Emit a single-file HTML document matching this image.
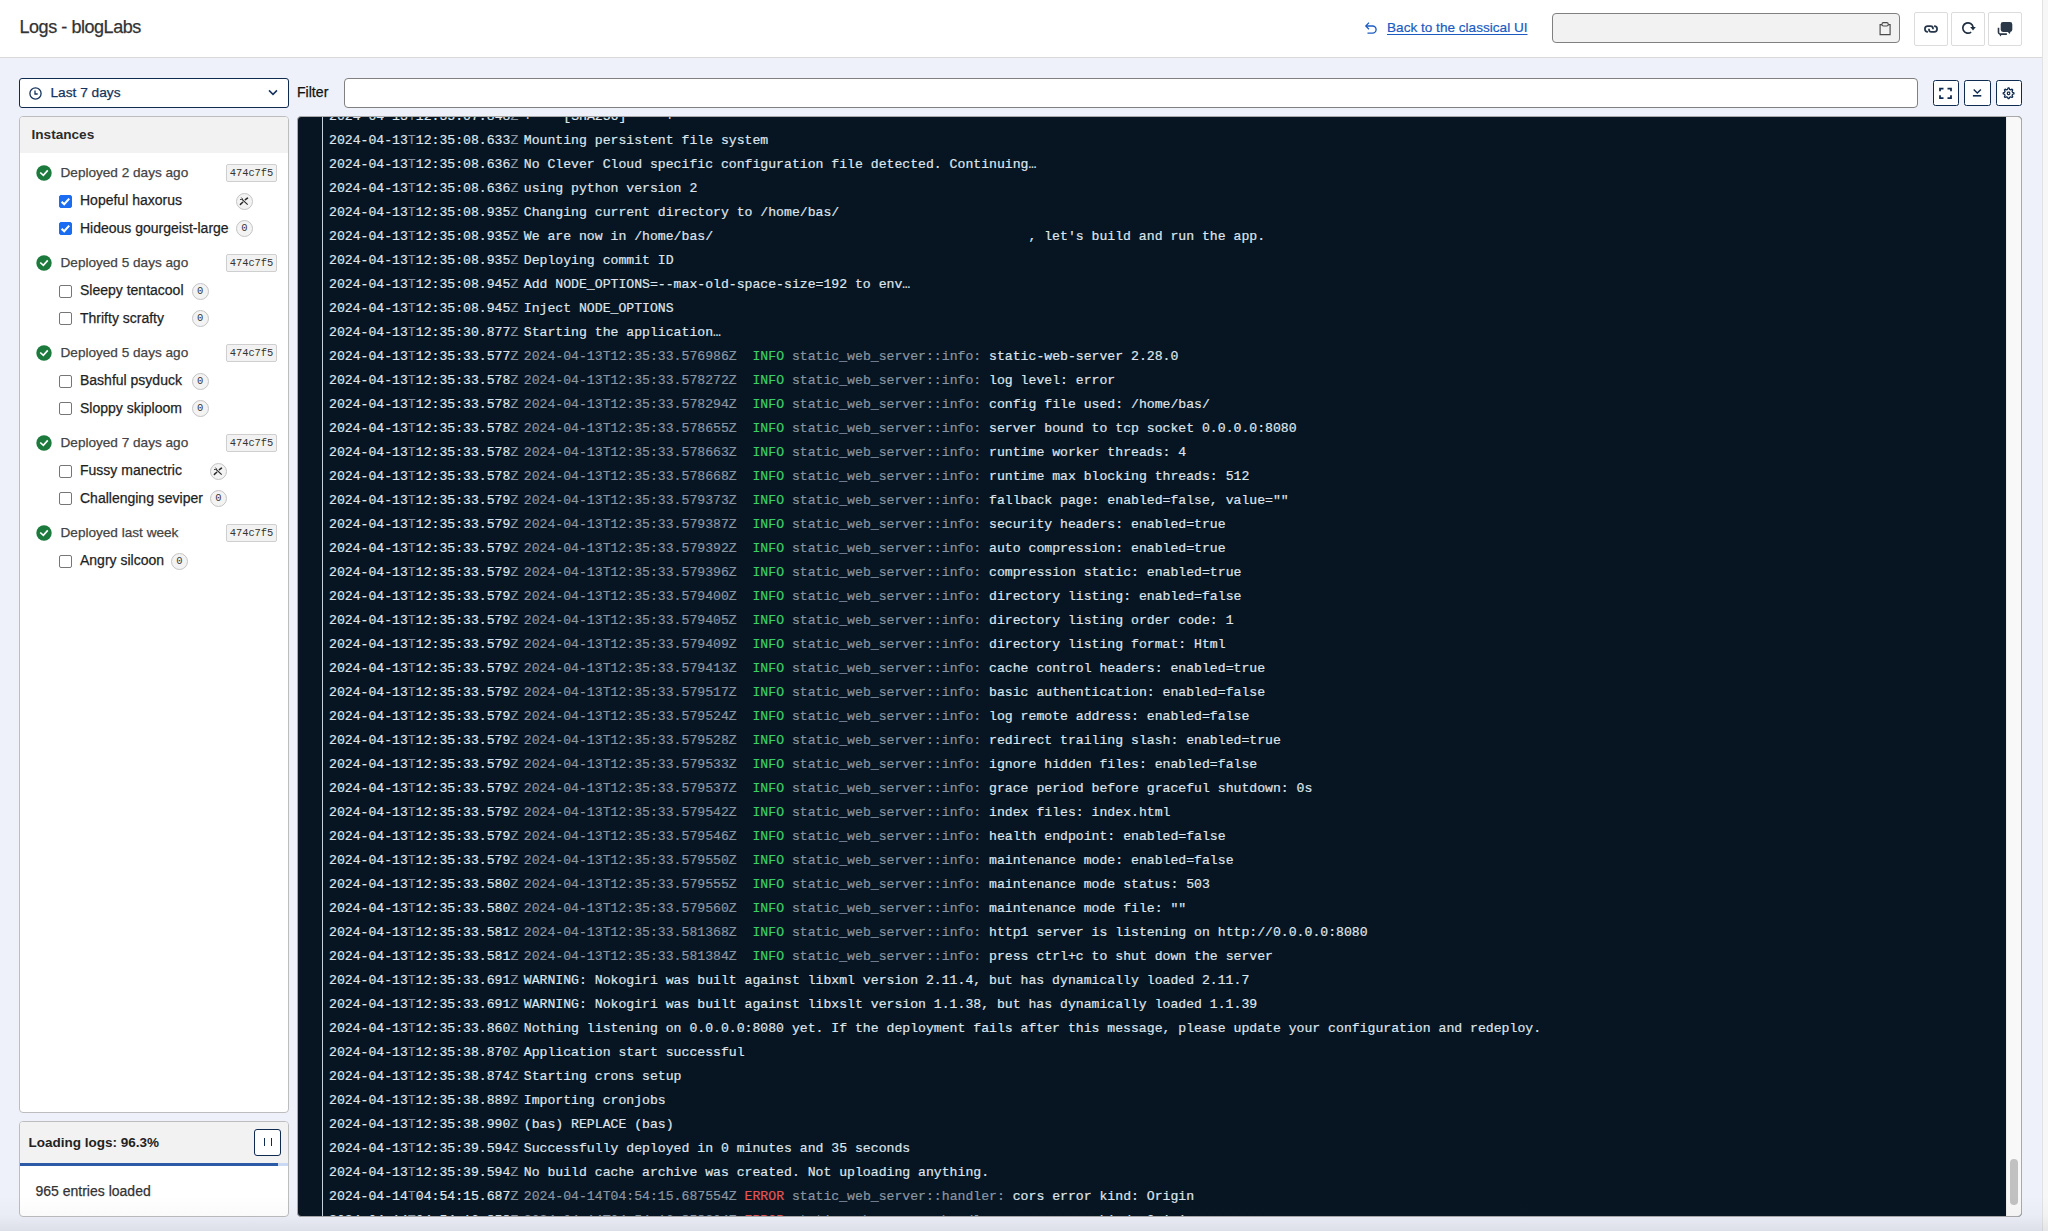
<!DOCTYPE html>
<html><head><meta charset="utf-8"><title>Logs - blogLabs</title>
<style>
*{box-sizing:border-box;margin:0;padding:0}
html,body{width:2048px;height:1231px;overflow:hidden}
body{position:relative;background:#eef1f9;font-family:"Liberation Sans",sans-serif;color:#333}
.ab{position:absolute}
svg{display:block}
#hdr{position:absolute;left:0;top:0;width:2042px;height:58px;background:#fff;border-bottom:1px solid #d9d9d9}
#rstrip{position:absolute;left:2042px;top:0;width:6px;height:1231px;background:#f7f7f7;border-left:1px solid #e2e2e2}
.title{left:19.5px;top:16px;font-size:18px;letter-spacing:-0.45px;line-height:22px;color:#333;white-space:pre;-webkit-text-stroke:0.25px #333}
.back{left:1387px;top:18.5px;font-size:13.6px;line-height:18px;color:#1b5bc2;text-decoration:underline;text-underline-offset:1.5px;white-space:pre;-webkit-text-stroke:0.2px #1b5bc2}
.dinput{left:1552px;top:13px;width:348px;height:30px;border:1px solid #808080;border-radius:4px;background:#f2f2f2}
.hbtn{top:12px;width:34px;height:34px;border:1px solid #dcdcdc;border-radius:2px;background:#fff}
.hbtn svg{position:absolute;left:0;top:0}
.sel{left:19px;top:78px;width:270px;height:30px;border:1px solid #0f2b50;border-radius:3px;background:#fff}
.seltxt{left:50.5px;top:84px;font-size:13.7px;line-height:18px;color:#15335c;white-space:pre;-webkit-text-stroke:0.25px #15335c}
.flabel{left:297px;top:83px;font-size:14.1px;line-height:18px;color:#111;white-space:pre;-webkit-text-stroke:0.25px #111}
.finput{left:344px;top:78px;width:1574px;height:30px;border:1px solid #808080;border-radius:4px;background:#fff}
.fbtn{top:80px;width:26px;height:26px;border:1px solid #0f2b50;border-radius:2.5px;background:#fff}
.fbtn svg{position:absolute;left:0;top:0}
.panel{border:1px solid #bdbdbd;border-radius:4px;background:#fff;overflow:hidden}
.phead{position:absolute;left:0;top:0;right:0;background:#f2f2f2}
.ptitle{font-size:13.6px;font-weight:bold;line-height:18px;color:#2b2b2b;white-space:pre}
.deptxt{font-size:13.6px;line-height:18px;color:#444;white-space:pre;-webkit-text-stroke:0.25px #444}
.iname{font-size:14px;line-height:18px;color:#1f1f1f;white-space:pre;-webkit-text-stroke:0.25px #1f1f1f}
.sha{width:51px;height:18px;border:1px solid #cfcfcf;border-radius:2px;background:#f2f2f2;font-family:"Liberation Mono",monospace;font-size:10.4px;line-height:17px;text-align:center;color:#333;letter-spacing:0}
.cb{width:13px;height:13px;border:1px solid #767676;border-radius:2px;background:#fff}
.cb.on{background:#1a6cf0;border-color:#1a6cf0}
.cb svg{position:absolute;left:-1px;top:-1px}
.bdg{width:17px;height:17px;border:1px solid #c4c4c4;border-radius:50%;background:#f3f3f3;font-family:"Liberation Mono",monospace;font-size:10.5px;line-height:15px;text-align:center;color:#333}
#logs{left:297px;top:116px;width:1725px;height:1101px;border:1px solid #a9a9a9;border-radius:4px;background:#061521;overflow:hidden}
#gut{position:absolute;left:24px;top:0;width:1px;height:100%;background:#c9d1dc}
#lines{position:absolute;left:31px;top:-11.6px;font-family:"Liberation Mono",monospace;font-size:13.15px;line-height:24px;color:#dfe5ee;-webkit-text-stroke:0.2px currentColor}
.l{height:24px;display:flex;white-space:pre}
.t i{font-style:normal;color:#8a95a3}
.m{margin-left:5.5px}
.g{color:#8a95a3}
.hy{font-weight:normal;position:relative;top:-2px}
.ok{color:#3ccf66}
.er{color:#e65353}
#sb{position:absolute;right:0;top:0;width:15px;height:100%;background:#f8f8f8;border-left:1px solid #ececec}
#thumb{position:absolute;left:2.6px;top:1042px;width:8px;height:46px;border-radius:4px;background:#c1c1c1}
#shade{position:absolute;left:0;top:1196px;width:2048px;height:35px;background:linear-gradient(to bottom,rgba(40,45,60,0) 0%,rgba(40,45,60,0.025) 55%,rgba(40,45,60,0.09) 100%);pointer-events:none}
</style></head><body>
<div id="hdr"></div>
<div id="rstrip"></div>
<div class="ab title">Logs - blogLabs</div>
<div class="ab" style="left:1364px;top:20px"><svg width="15" height="15" viewBox="0 0 15 15"><path d="M2 6 H8.5 A3.6 3.6 0 0 1 8.5 13.2 H3.5" fill="none" stroke="#1b5bc2" stroke-width="1.3"/><path d="M5 2.6 L1.8 6 L5 9.3" fill="none" stroke="#1b5bc2" stroke-width="1.3"/></svg></div>
<div class="ab back">Back to the classical UI</div>
<div class="ab dinput"><svg style="position:absolute;left:326px;top:8px" width="14" height="15" viewBox="0 0 14 15"><path d="M1.1 2.6 H11.1 V12.6 H1.1 Z" fill="none" stroke="#4a4a4a" stroke-width="1.15"/><rect x="2.95" y="0.65" width="6.3" height="3.4" rx="1.5" fill="#f2f2f2" stroke="#4a4a4a" stroke-width="1.1"/></svg></div>
<div class="ab hbtn" style="left:1914px"><svg width="34" height="34" viewBox="1 1 34 34"><path d="M13.9 19.8 H13.7 A2.8 2.8 0 0 1 13.7 14.2 H16.6 A2.4 2.4 0 0 1 19 16.6 V17.2" fill="none" stroke="#26364a" stroke-width="1.7"/><path d="M20.1 14.2 H20.3 A2.8 2.8 0 0 1 20.3 19.8 H17.4 A2.4 2.4 0 0 1 15 17.4 V16.8" fill="none" stroke="#26364a" stroke-width="1.7"/></svg></div>
<div class="ab hbtn" style="left:1951px"><svg width="34" height="34" viewBox="1 1 34 34"><path d="M20.13 20.15 A5.2 5.2 0 1 1 22.1 15.1" fill="none" stroke="#1e2e40" stroke-width="1.7"/><path d="M19.2 15.0 L24.8 15.0 L22 18.4 Z" fill="#1e2e40"/></svg></div>
<div class="ab hbtn" style="left:1988px"><svg width="34" height="34" viewBox="1 1 34 34"><path d="M10.5 15.7 V20.2 A1.9 1.9 0 0 0 12.4 22.1 H18.9" fill="none" stroke="#2b3847" stroke-width="1.6"/><path d="M11.3 22.2 L12.4 24.4 L13.9 22.2 Z" fill="#2b3847"/><rect x="12.7" y="10.1" width="11.6" height="9.8" rx="2.3" fill="#2b3847"/><path d="M19.2 19.5 L21.9 21.9 L22.4 19.5 Z" fill="#2b3847"/></svg></div>

<div class="ab sel"></div>
<div class="ab" style="left:29px;top:87px"><svg width="13" height="13" viewBox="0 0 13 13"><circle cx="6.5" cy="6.5" r="5.6" fill="none" stroke="#15335c" stroke-width="1.3"/><path d="M6 3.5 V7 H8.7" fill="none" stroke="#15335c" stroke-width="1.3"/></svg></div>
<div class="ab seltxt">Last 7 days</div>
<div class="ab" style="left:268px;top:89px"><svg width="10" height="7" viewBox="0 0 10 7"><path d="M1 1.4 L5 5.4 L9 1.4" fill="none" stroke="#15335c" stroke-width="1.5"/></svg></div>
<div class="ab flabel">Filter</div>
<div class="ab finput"></div>
<div class="ab fbtn" style="left:1933px"><svg width="26" height="26" viewBox="1 1 26 26"><path d="M7 11.3 V8.7 H10.5 M14.5 8.7 H18 V11.3 M18 15.2 V18 H14.5 M10.5 18 H7 V15.2" fill="none" stroke="#0f2b50" stroke-width="1.75"/></svg></div>
<div class="ab fbtn" style="left:1964px;width:27px"><svg width="26" height="26" viewBox="1 1 26 26"><path d="M9.7 9.5 L13.3 13.1 L16.9 9.5" fill="none" stroke="#0f2b50" stroke-width="1.4"/><path d="M8.9 15.8 H17.3" fill="none" stroke="#0f2b50" stroke-width="1.6"/></svg></div>
<div class="ab fbtn" style="left:1996px"><svg width="26" height="26" viewBox="1 1 26 26"><path d="M11.61 9.31 L12.04 7.93 L13.10 7.93 L13.53 9.31 L14.71 9.80 L16.00 9.13 L16.74 9.87 L16.07 11.16 L16.56 12.34 L17.94 12.77 L17.94 13.83 L16.56 14.26 L16.07 15.44 L16.74 16.73 L16.00 17.47 L14.71 16.80 L13.53 17.29 L13.10 18.67 L12.04 18.67 L11.61 17.29 L10.43 16.80 L9.14 17.47 L8.40 16.73 L9.07 15.44 L8.58 14.26 L7.20 13.83 L7.20 12.77 L8.58 12.34 L9.07 11.16 L8.40 9.87 L9.14 9.13 L10.43 9.80 Z" fill="none" stroke="#0f2b50" stroke-width="1.25" stroke-linejoin="round"/><rect x="11.37" y="12.2" width="2.4" height="2.4" rx="0.8" fill="none" stroke="#0f2b50" stroke-width="1.2"/></svg></div>

<div class="ab panel" style="left:19px;top:116px;width:270px;height:997px">
  <div class="phead" style="height:36px"></div>
  <div class="ab ptitle" style="left:11.5px;top:8.5px">Instances</div>
</div>
<div class="ab dep" style="left:36.05px;top:164.90px"><svg width="16" height="16" viewBox="0 0 16 16"><circle cx="8" cy="8" r="7.7" fill="#1c7a3d"/><path d="M4.25 7.5 L7.35 10.4 L11.75 5.4" fill="none" stroke="#fff" stroke-width="1.7"/></svg></div>
<div class="ab deptxt" style="left:60.5px;top:164px">Deployed 2 days ago</div>
<div class="ab sha" style="left:226px;top:164px">474c7f5</div>
<div class="ab cb on" style="left:59px;top:195.0px"><svg width="13" height="13" viewBox="0 0 13 13"><path d="M2.6 6.7 L5.2 9.3 L10.2 3.6" fill="none" stroke="#fff" stroke-width="2.1"/></svg></div>
<div class="ab iname" style="left:80px;top:191.45px">Hopeful haxorus</div>
<div class="ab bdg" style="left:236.0px;top:193.0px"><svg width="17" height="17" viewBox="0 0 17 17" style="position:absolute;left:-1px;top:-1px"><path d="M6.6 6.9 L11.7 11.6" fill="none" stroke="#2a2a2a" stroke-width="1.15"/><path d="M4.1 6.5 Q5.6 6.2 6.6 6.9 Q6.6 5.6 5.4 4.6" fill="none" stroke="#2a2a2a" stroke-width="1"/><path d="M4.4 11.4 L6.7 9.3" fill="none" stroke="#2a2a2a" stroke-width="1.5" stroke-linecap="round"/><path d="M9.4 6.6 L11.5 5.1" fill="none" stroke="#2a2a2a" stroke-width="1.6" stroke-linecap="round"/></svg></div>
<div class="ab cb on" style="left:59px;top:222.2px"><svg width="13" height="13" viewBox="0 0 13 13"><path d="M2.6 6.7 L5.2 9.3 L10.2 3.6" fill="none" stroke="#fff" stroke-width="2.1"/></svg></div>
<div class="ab iname" style="left:80px;top:219.15px">Hideous gourgeist-large</div>
<div class="ab bdg" style="left:236.0px;top:220.2px">0</div>
<div class="ab dep" style="left:36.05px;top:254.90px"><svg width="16" height="16" viewBox="0 0 16 16"><circle cx="8" cy="8" r="7.7" fill="#1c7a3d"/><path d="M4.25 7.5 L7.35 10.4 L11.75 5.4" fill="none" stroke="#fff" stroke-width="1.7"/></svg></div>
<div class="ab deptxt" style="left:60.5px;top:254px">Deployed 5 days ago</div>
<div class="ab sha" style="left:226px;top:254px">474c7f5</div>
<div class="ab cb" style="left:59px;top:285.0px"></div>
<div class="ab iname" style="left:80px;top:281.45px">Sleepy tentacool</div>
<div class="ab bdg" style="left:191.7px;top:283.0px">0</div>
<div class="ab cb" style="left:59px;top:312.2px"></div>
<div class="ab iname" style="left:80px;top:309.15px">Thrifty scrafty</div>
<div class="ab bdg" style="left:191.7px;top:310.2px">0</div>
<div class="ab dep" style="left:36.05px;top:344.90px"><svg width="16" height="16" viewBox="0 0 16 16"><circle cx="8" cy="8" r="7.7" fill="#1c7a3d"/><path d="M4.25 7.5 L7.35 10.4 L11.75 5.4" fill="none" stroke="#fff" stroke-width="1.7"/></svg></div>
<div class="ab deptxt" style="left:60.5px;top:344px">Deployed 5 days ago</div>
<div class="ab sha" style="left:226px;top:344px">474c7f5</div>
<div class="ab cb" style="left:59px;top:375.0px"></div>
<div class="ab iname" style="left:80px;top:371.45px">Bashful psyduck</div>
<div class="ab bdg" style="left:191.7px;top:373.0px">0</div>
<div class="ab cb" style="left:59px;top:402.2px"></div>
<div class="ab iname" style="left:80px;top:399.15px">Sloppy skiploom</div>
<div class="ab bdg" style="left:191.7px;top:400.2px">0</div>
<div class="ab dep" style="left:36.05px;top:434.90px"><svg width="16" height="16" viewBox="0 0 16 16"><circle cx="8" cy="8" r="7.7" fill="#1c7a3d"/><path d="M4.25 7.5 L7.35 10.4 L11.75 5.4" fill="none" stroke="#fff" stroke-width="1.7"/></svg></div>
<div class="ab deptxt" style="left:60.5px;top:434px">Deployed 7 days ago</div>
<div class="ab sha" style="left:226px;top:434px">474c7f5</div>
<div class="ab cb" style="left:59px;top:465.0px"></div>
<div class="ab iname" style="left:80px;top:461.45px">Fussy manectric</div>
<div class="ab bdg" style="left:209.9px;top:463.0px"><svg width="17" height="17" viewBox="0 0 17 17" style="position:absolute;left:-1px;top:-1px"><path d="M6.6 6.9 L11.7 11.6" fill="none" stroke="#2a2a2a" stroke-width="1.15"/><path d="M4.1 6.5 Q5.6 6.2 6.6 6.9 Q6.6 5.6 5.4 4.6" fill="none" stroke="#2a2a2a" stroke-width="1"/><path d="M4.4 11.4 L6.7 9.3" fill="none" stroke="#2a2a2a" stroke-width="1.5" stroke-linecap="round"/><path d="M9.4 6.6 L11.5 5.1" fill="none" stroke="#2a2a2a" stroke-width="1.6" stroke-linecap="round"/></svg></div>
<div class="ab cb" style="left:59px;top:492.2px"></div>
<div class="ab iname" style="left:80px;top:489.15px">Challenging seviper</div>
<div class="ab bdg" style="left:209.9px;top:490.2px">0</div>
<div class="ab dep" style="left:36.05px;top:524.90px"><svg width="16" height="16" viewBox="0 0 16 16"><circle cx="8" cy="8" r="7.7" fill="#1c7a3d"/><path d="M4.25 7.5 L7.35 10.4 L11.75 5.4" fill="none" stroke="#fff" stroke-width="1.7"/></svg></div>
<div class="ab deptxt" style="left:60.5px;top:524px">Deployed last week</div>
<div class="ab sha" style="left:226px;top:524px">474c7f5</div>
<div class="ab cb" style="left:59px;top:555.0px"></div>
<div class="ab iname" style="left:80px;top:551.45px">Angry silcoon</div>
<div class="ab bdg" style="left:170.9px;top:553.0px">0</div>

<div class="ab panel" style="left:19px;top:1121px;width:270px;height:96px">
  <div class="phead" style="height:41px"></div>
  <div class="ab" style="left:0;top:41px;width:258px;height:3px;background:#2d5aa6"></div>
  <div class="ab" style="left:258px;top:41px;width:12px;height:3px;background:#c9d8f5"></div>
  <div class="ab ptitle" style="left:8.5px;top:12px;font-size:13.5px;color:#222">Loading logs: 96.3%</div>
  <div class="ab" style="left:234px;top:7px;width:27px;height:27px;border:1px solid #0f2b50;border-radius:3px;background:#fff"><div class="ab" style="left:9px;top:8px;width:1.4px;height:8px;background:#0f2b50"></div><div class="ab" style="left:16px;top:8px;width:1.4px;height:8px;background:#0f2b50"></div></div>
  <div class="ab" style="left:15.5px;top:60px;font-size:14px;line-height:18px;color:#333;white-space:pre;-webkit-text-stroke:0.25px #333">965 entries loaded</div>
</div>

<div class="ab" id="logs">
  <div id="gut"></div>
  <div id="lines">
<div class="l"><span class="t">2024<b class="hy">-</b>04<b class="hy">-</b>13<i>T</i>12:35:07.848<i>Z</i></span><span class="m">+<b class="hy">-</b><b class="hy">-</b><b class="hy">-</b><b class="hy">-</b>[SHA256]<b class="hy">-</b><b class="hy">-</b><b class="hy">-</b><b class="hy">-</b><b class="hy">-</b>+</span></div>
<div class="l"><span class="t">2024-04-13<i>T</i>12:35:08.633<i>Z</i></span><span class="m">Mounting persistent file system</span></div>
<div class="l"><span class="t">2024-04-13<i>T</i>12:35:08.636<i>Z</i></span><span class="m">No Clever Cloud specific configuration file detected. Continuing…</span></div>
<div class="l"><span class="t">2024-04-13<i>T</i>12:35:08.636<i>Z</i></span><span class="m">using python version 2</span></div>
<div class="l"><span class="t">2024-04-13<i>T</i>12:35:08.935<i>Z</i></span><span class="m">Changing current directory to /home/bas/</span></div>
<div class="l"><span class="t">2024-04-13<i>T</i>12:35:08.935<i>Z</i></span><span class="m">We are now in /home/bas/                                        , let's build and run the app.</span></div>
<div class="l"><span class="t">2024-04-13<i>T</i>12:35:08.935<i>Z</i></span><span class="m">Deploying commit ID</span></div>
<div class="l"><span class="t">2024-04-13<i>T</i>12:35:08.945<i>Z</i></span><span class="m">Add NODE_OPTIONS=--max-old-space-size=192 to env…</span></div>
<div class="l"><span class="t">2024-04-13<i>T</i>12:35:08.945<i>Z</i></span><span class="m">Inject NODE_OPTIONS</span></div>
<div class="l"><span class="t">2024-04-13<i>T</i>12:35:30.877<i>Z</i></span><span class="m">Starting the application…</span></div>
<div class="l"><span class="t">2024-04-13<i>T</i>12:35:33.577<i>Z</i></span><span class="m"><span class="g">2024-04-13T12:35:33.576986Z</span> <span class="ok"> INFO</span> <span class="g">static_web_server::info:</span> static-web-server 2.28.0</span></div>
<div class="l"><span class="t">2024-04-13<i>T</i>12:35:33.578<i>Z</i></span><span class="m"><span class="g">2024-04-13T12:35:33.578272Z</span> <span class="ok"> INFO</span> <span class="g">static_web_server::info:</span> log level: error</span></div>
<div class="l"><span class="t">2024-04-13<i>T</i>12:35:33.578<i>Z</i></span><span class="m"><span class="g">2024-04-13T12:35:33.578294Z</span> <span class="ok"> INFO</span> <span class="g">static_web_server::info:</span> config file used: /home/bas/</span></div>
<div class="l"><span class="t">2024-04-13<i>T</i>12:35:33.578<i>Z</i></span><span class="m"><span class="g">2024-04-13T12:35:33.578655Z</span> <span class="ok"> INFO</span> <span class="g">static_web_server::info:</span> server bound to tcp socket 0.0.0.0:8080</span></div>
<div class="l"><span class="t">2024-04-13<i>T</i>12:35:33.578<i>Z</i></span><span class="m"><span class="g">2024-04-13T12:35:33.578663Z</span> <span class="ok"> INFO</span> <span class="g">static_web_server::info:</span> runtime worker threads: 4</span></div>
<div class="l"><span class="t">2024-04-13<i>T</i>12:35:33.578<i>Z</i></span><span class="m"><span class="g">2024-04-13T12:35:33.578668Z</span> <span class="ok"> INFO</span> <span class="g">static_web_server::info:</span> runtime max blocking threads: 512</span></div>
<div class="l"><span class="t">2024-04-13<i>T</i>12:35:33.579<i>Z</i></span><span class="m"><span class="g">2024-04-13T12:35:33.579373Z</span> <span class="ok"> INFO</span> <span class="g">static_web_server::info:</span> fallback page: enabled=false, value=""</span></div>
<div class="l"><span class="t">2024-04-13<i>T</i>12:35:33.579<i>Z</i></span><span class="m"><span class="g">2024-04-13T12:35:33.579387Z</span> <span class="ok"> INFO</span> <span class="g">static_web_server::info:</span> security headers: enabled=true</span></div>
<div class="l"><span class="t">2024-04-13<i>T</i>12:35:33.579<i>Z</i></span><span class="m"><span class="g">2024-04-13T12:35:33.579392Z</span> <span class="ok"> INFO</span> <span class="g">static_web_server::info:</span> auto compression: enabled=true</span></div>
<div class="l"><span class="t">2024-04-13<i>T</i>12:35:33.579<i>Z</i></span><span class="m"><span class="g">2024-04-13T12:35:33.579396Z</span> <span class="ok"> INFO</span> <span class="g">static_web_server::info:</span> compression static: enabled=true</span></div>
<div class="l"><span class="t">2024-04-13<i>T</i>12:35:33.579<i>Z</i></span><span class="m"><span class="g">2024-04-13T12:35:33.579400Z</span> <span class="ok"> INFO</span> <span class="g">static_web_server::info:</span> directory listing: enabled=false</span></div>
<div class="l"><span class="t">2024-04-13<i>T</i>12:35:33.579<i>Z</i></span><span class="m"><span class="g">2024-04-13T12:35:33.579405Z</span> <span class="ok"> INFO</span> <span class="g">static_web_server::info:</span> directory listing order code: 1</span></div>
<div class="l"><span class="t">2024-04-13<i>T</i>12:35:33.579<i>Z</i></span><span class="m"><span class="g">2024-04-13T12:35:33.579409Z</span> <span class="ok"> INFO</span> <span class="g">static_web_server::info:</span> directory listing format: Html</span></div>
<div class="l"><span class="t">2024-04-13<i>T</i>12:35:33.579<i>Z</i></span><span class="m"><span class="g">2024-04-13T12:35:33.579413Z</span> <span class="ok"> INFO</span> <span class="g">static_web_server::info:</span> cache control headers: enabled=true</span></div>
<div class="l"><span class="t">2024-04-13<i>T</i>12:35:33.579<i>Z</i></span><span class="m"><span class="g">2024-04-13T12:35:33.579517Z</span> <span class="ok"> INFO</span> <span class="g">static_web_server::info:</span> basic authentication: enabled=false</span></div>
<div class="l"><span class="t">2024-04-13<i>T</i>12:35:33.579<i>Z</i></span><span class="m"><span class="g">2024-04-13T12:35:33.579524Z</span> <span class="ok"> INFO</span> <span class="g">static_web_server::info:</span> log remote address: enabled=false</span></div>
<div class="l"><span class="t">2024-04-13<i>T</i>12:35:33.579<i>Z</i></span><span class="m"><span class="g">2024-04-13T12:35:33.579528Z</span> <span class="ok"> INFO</span> <span class="g">static_web_server::info:</span> redirect trailing slash: enabled=true</span></div>
<div class="l"><span class="t">2024-04-13<i>T</i>12:35:33.579<i>Z</i></span><span class="m"><span class="g">2024-04-13T12:35:33.579533Z</span> <span class="ok"> INFO</span> <span class="g">static_web_server::info:</span> ignore hidden files: enabled=false</span></div>
<div class="l"><span class="t">2024-04-13<i>T</i>12:35:33.579<i>Z</i></span><span class="m"><span class="g">2024-04-13T12:35:33.579537Z</span> <span class="ok"> INFO</span> <span class="g">static_web_server::info:</span> grace period before graceful shutdown: 0s</span></div>
<div class="l"><span class="t">2024-04-13<i>T</i>12:35:33.579<i>Z</i></span><span class="m"><span class="g">2024-04-13T12:35:33.579542Z</span> <span class="ok"> INFO</span> <span class="g">static_web_server::info:</span> index files: index.html</span></div>
<div class="l"><span class="t">2024-04-13<i>T</i>12:35:33.579<i>Z</i></span><span class="m"><span class="g">2024-04-13T12:35:33.579546Z</span> <span class="ok"> INFO</span> <span class="g">static_web_server::info:</span> health endpoint: enabled=false</span></div>
<div class="l"><span class="t">2024-04-13<i>T</i>12:35:33.579<i>Z</i></span><span class="m"><span class="g">2024-04-13T12:35:33.579550Z</span> <span class="ok"> INFO</span> <span class="g">static_web_server::info:</span> maintenance mode: enabled=false</span></div>
<div class="l"><span class="t">2024-04-13<i>T</i>12:35:33.580<i>Z</i></span><span class="m"><span class="g">2024-04-13T12:35:33.579555Z</span> <span class="ok"> INFO</span> <span class="g">static_web_server::info:</span> maintenance mode status: 503</span></div>
<div class="l"><span class="t">2024-04-13<i>T</i>12:35:33.580<i>Z</i></span><span class="m"><span class="g">2024-04-13T12:35:33.579560Z</span> <span class="ok"> INFO</span> <span class="g">static_web_server::info:</span> maintenance mode file: ""</span></div>
<div class="l"><span class="t">2024-04-13<i>T</i>12:35:33.581<i>Z</i></span><span class="m"><span class="g">2024-04-13T12:35:33.581368Z</span> <span class="ok"> INFO</span> <span class="g">static_web_server::info:</span> http1 server is listening on http://0.0.0.0:8080</span></div>
<div class="l"><span class="t">2024-04-13<i>T</i>12:35:33.581<i>Z</i></span><span class="m"><span class="g">2024-04-13T12:35:33.581384Z</span> <span class="ok"> INFO</span> <span class="g">static_web_server::info:</span> press ctrl+c to shut down the server</span></div>
<div class="l"><span class="t">2024-04-13<i>T</i>12:35:33.691<i>Z</i></span><span class="m">WARNING: Nokogiri was built against libxml version 2.11.4, but has dynamically loaded 2.11.7</span></div>
<div class="l"><span class="t">2024-04-13<i>T</i>12:35:33.691<i>Z</i></span><span class="m">WARNING: Nokogiri was built against libxslt version 1.1.38, but has dynamically loaded 1.1.39</span></div>
<div class="l"><span class="t">2024-04-13<i>T</i>12:35:33.860<i>Z</i></span><span class="m">Nothing listening on 0.0.0.0:8080 yet. If the deployment fails after this message, please update your configuration and redeploy.</span></div>
<div class="l"><span class="t">2024-04-13<i>T</i>12:35:38.870<i>Z</i></span><span class="m">Application start successful</span></div>
<div class="l"><span class="t">2024-04-13<i>T</i>12:35:38.874<i>Z</i></span><span class="m">Starting crons setup</span></div>
<div class="l"><span class="t">2024-04-13<i>T</i>12:35:38.889<i>Z</i></span><span class="m">Importing cronjobs</span></div>
<div class="l"><span class="t">2024-04-13<i>T</i>12:35:38.990<i>Z</i></span><span class="m">(bas) REPLACE (bas)</span></div>
<div class="l"><span class="t">2024-04-13<i>T</i>12:35:39.594<i>Z</i></span><span class="m">Successfully deployed in 0 minutes and 35 seconds</span></div>
<div class="l"><span class="t">2024-04-13<i>T</i>12:35:39.594<i>Z</i></span><span class="m">No build cache archive was created. Not uploading anything.</span></div>
<div class="l"><span class="t">2024-04-14<i>T</i>04:54:15.687<i>Z</i></span><span class="m"><span class="g">2024-04-14T04:54:15.687554Z</span> <span class="er">ERROR</span> <span class="g">static_web_server::handler:</span> cors error kind: Origin</span></div>
<div class="l"><span class="t">2024-04-14<i>T</i>04:54:16.858<i>Z</i></span><span class="m"><span class="g">2024-04-14T04:54:16.858204Z</span> <span class="er">ERROR</span> <span class="g">static_web_server::handler:</span> cors error kind: Origin</span></div>
  </div>
  <div id="sb"><div id="thumb"></div></div>
</div>
<div id="shade"></div>
</body></html>
